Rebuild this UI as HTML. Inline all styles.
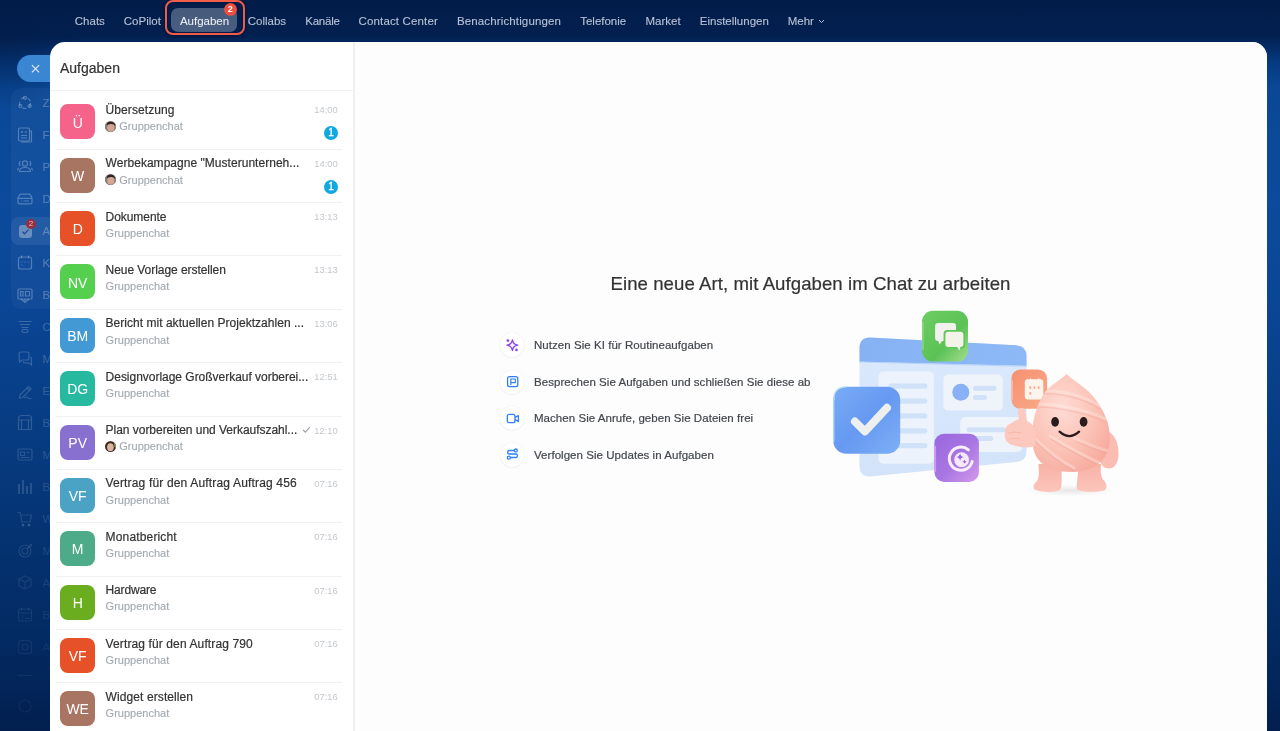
<!DOCTYPE html>
<html><head><meta charset="utf-8">
<style>
*{margin:0;padding:0;box-sizing:border-box}
html,body{width:1280px;height:731px;overflow:hidden}
body{position:relative;font-family:"Liberation Sans",sans-serif;
background:radial-gradient(ellipse 90px 70px at 0px 40px,rgba(2,28,72,0.55),rgba(2,28,72,0)),linear-gradient(180deg,#021c48 0px,#022050 36px,#053a80 62px,#0a4896 88px,#0b4a9c 200px,#0a4696 300px,#073c82 430px,#04316e 560px,#032a62 640px,#021f4f 731px);
}
.nav{position:absolute;top:15.6px;font-size:11.5px;line-height:1;color:#b9c3d5;white-space:nowrap}
.pill{position:absolute;left:171px;top:7.8px;width:66px;height:24.2px;border-radius:7px;background:rgba(255,255,255,0.28)}
.redbox{position:absolute;left:165.3px;top:-0.2px;width:79.4px;height:35.4px;border:2.8px solid #f05c4a;border-radius:8px;box-shadow:0 1px 3px rgba(0,5,25,0.55),inset 0 0 2px rgba(0,5,25,0.6)}
.nbadge{position:absolute;left:223.8px;top:3px;width:13px;height:13px;border-radius:50%;background:#ec4e40;color:#fff;font-size:9px;font-weight:bold;line-height:13px;text-align:center}
.sb{position:absolute;left:11px;top:88.3px;width:60px;height:221px;border-radius:10px;background:rgba(255,255,255,0.035)}
.sbi{position:absolute;left:18px;width:14px;height:14px;border:1.3px solid rgba(255,255,255,0.22);border-radius:3px}
.sbl{position:absolute;left:42.5px;font-size:11.5px;line-height:1;color:rgba(255,255,255,0.25)}
.close{position:absolute;left:16.6px;top:55px;width:60px;height:27.3px;border-radius:14px;background:#3a86d2}
.panel{position:absolute;left:49.6px;top:41.5px;width:1217.5px;height:720px;background:#fff;border-radius:15px 15px 0 0;overflow:hidden}
.list{position:absolute;left:303.8px;top:0;width:1.5px;height:100%;background:#eef0f3}
.hdr{position:absolute;left:60px;top:60.85px;font-size:14px;line-height:1;color:#333}
.hsep{position:absolute;left:50px;top:89.9px;width:304px;height:1.2px;background:#eff1f3}
.sep{position:absolute;left:56px;width:286px;height:1px;background:#eff1f3}
.av{position:absolute;left:60.2px;width:35px;height:35px;border-radius:8px;color:#fff;font-size:14px;line-height:35px;text-align:center}
.av span{position:relative;top:1.2px}
.tt{position:absolute;left:105.6px;font-size:12px;line-height:1;color:#333;white-space:nowrap}
.st{position:absolute;left:105.6px;font-size:11px;line-height:1;color:#a3a9b1;white-space:nowrap;-webkit-text-stroke:0.12px #a3a9b1}
.tm{position:absolute;right:942.5px;font-size:9.9px;transform:scaleX(0.95);transform-origin:100% 50%;line-height:1;color:#c4c8cd;white-space:nowrap}
.bd{position:absolute;left:324px;width:14px;height:14px;border-radius:50%;background:#10a8e0;color:#fff;font-size:10px;line-height:14px;text-align:center;-webkit-text-stroke:0.3px #fff}
.ua{position:absolute;left:105px;width:11px;height:11px;border-radius:50%;background:radial-gradient(circle at 50% 45%,#e8b89e 0,#d09a80 35%,#6d5a50 70%)}
.ck{position:absolute;left:302px}
.big{position:absolute;left:610.5px;top:274.8px;font-size:18.6px;letter-spacing:0.065px;line-height:1;color:#333;white-space:nowrap}
.fi{position:absolute;left:500.4px;width:24px;height:24px;margin-top:0.8px;border-radius:50%;background:#fff;box-shadow:0 0 1.5px rgba(0,0,0,0.09),0 1px 2px rgba(0,0,0,0.03)}
.fi svg{position:absolute;left:-0.1px;top:-0.5px}
.ft{position:absolute;left:534px;font-size:11.5px;line-height:1;letter-spacing:0.045px;color:#43474d;white-space:nowrap}
#root{position:absolute;left:0;top:0;width:1280px;height:731px;will-change:transform}
.tt,.hdr,.big{-webkit-text-stroke:0.2px #333}
.ft{-webkit-text-stroke:0.2px #43474d}
.nav{-webkit-text-stroke:0.1px #b9c3d5}
</style></head><body><div id="root">
<!-- top nav -->
<div class="pill"></div>
<div class="nav" style="left:74.8px">Chats</div>
<div class="nav" style="left:123.8px">CoPilot</div>
<div class="nav" style="left:179.9px;color:#f4f6fa">Aufgaben</div>
<div class="nav" style="left:247.7px">Collabs</div>
<div class="nav" style="left:305.3px;letter-spacing:-0.25px">Kanäle</div>
<div class="nav" style="left:358.6px;letter-spacing:0.14px">Contact Center</div>
<div class="nav" style="left:456.9px;letter-spacing:0.14px">Benachrichtigungen</div>
<div class="nav" style="left:580.2px">Telefonie</div>
<div class="nav" style="left:645.5px">Market</div>
<div class="nav" style="left:699.8px">Einstellungen</div>
<div class="nav" style="left:787.7px">Mehr</div>
<svg style="position:absolute;left:818px;top:18.5px" width="7" height="5" viewBox="0 0 7 5"><path d="M1 1 L3.5 3.6 L6 1" fill="none" stroke="#b9c3d5" stroke-width="1"/></svg>
<div class="redbox"></div>
<div class="nbadge">2</div>

<!-- sidebar -->
<div class="sb"></div>
<div style="position:absolute;left:11px;top:216.8px;width:60px;height:28.4px;border-radius:8px;background:rgba(255,255,255,0.07)"></div>
<div class="sbl" style="top:98.4px;color:rgba(255,255,255,0.280)">Z</div>
<div class="sbl" style="top:130.4px;color:rgba(255,255,255,0.280)">F</div>
<div class="sbl" style="top:162.4px;color:rgba(255,255,255,0.280)">P</div>
<div class="sbl" style="top:194.4px;color:rgba(255,255,255,0.280)">D</div>
<div style="position:absolute;left:18.5px;top:224.5px;width:13px;height:13px;border-radius:3px;background:rgba(255,255,255,0.32)"></div>
<svg style="position:absolute;left:18.5px;top:224.5px" width="13" height="13" viewBox="0 0 13 13"><path d="M3.5 6.8 L5.6 8.8 L9.5 4.6" fill="none" stroke="#1d4f93" stroke-width="1.3"/></svg>
<div style="position:absolute;left:26px;top:218.5px;width:10px;height:10px;border-radius:50%;background:#9b2d3e;color:rgba(255,255,255,.7);font-size:8px;line-height:10px;text-align:center">2</div>
<div class="sbl" style="top:226.4px;color:rgba(255,255,255,0.280)">A</div>
<div class="sbl" style="top:258.4px;color:rgba(255,255,255,0.280)">K</div>
<div class="sbl" style="top:290.4px;color:rgba(255,255,255,0.280)">B</div>
<div class="sbl" style="top:322.4px;color:rgba(255,255,255,0.207)">C</div>
<div class="sbl" style="top:354.4px;color:rgba(255,255,255,0.192)">M</div>
<div class="sbl" style="top:386.4px;color:rgba(255,255,255,0.178)">E</div>
<div class="sbl" style="top:418.4px;color:rgba(255,255,255,0.164)">B</div>
<div class="sbl" style="top:450.4px;color:rgba(255,255,255,0.149)">M</div>
<div class="sbl" style="top:482.4px;color:rgba(255,255,255,0.135)">B</div>
<div class="sbl" style="top:514.4px;color:rgba(255,255,255,0.120)">W</div>
<div class="sbl" style="top:546.4px;color:rgba(255,255,255,0.106)">M</div>
<div class="sbl" style="top:578.4px;color:rgba(255,255,255,0.092)">A</div>
<div class="sbl" style="top:610.4px;color:rgba(255,255,255,0.077)">B</div>
<div class="sbl" style="top:642.4px;color:rgba(255,255,255,0.063)">A</div>
<svg style="position:absolute;left:0;top:0" width="50" height="731" viewBox="0 0 50 731"><g stroke="rgba(255,255,255,0.280)" fill="rgba(255,255,255,0.280)" stroke-width="1.2"><circle cx="25" cy="103" r="5.5" fill="none" stroke-dasharray="4 3"/><circle cx="25" cy="97.8" r="1.5" fill="none"/><circle cx="20.3" cy="106" r="1.5" fill="none"/><circle cx="29.7" cy="106" r="1.5" fill="none"/></g><g stroke="rgba(255,255,255,0.280)" fill="rgba(255,255,255,0.280)" stroke-width="1.2"><rect x="18.5" y="128" width="11" height="13" rx="1.5" fill="none"/><path d="M29.5 131 H31.5 V141 Q31.5 142 30.5 142 H21" fill="none"/><path d="M21 132 H23 M22 131 V133 M24.5 132 H27 M21 135.5 H27 M21 138 H27" fill="none"/></g><g stroke="rgba(255,255,255,0.280)" fill="rgba(255,255,255,0.280)" stroke-width="1.2"><circle cx="25" cy="163.5" r="2.6" fill="none"/><path d="M19.5 171.5 Q19.5 167.5 25 167.5 Q30.5 167.5 30.5 171.5 Z" fill="none"/><path d="M20 161 Q18.5 163.5 20 166 M30 161 Q31.5 163.5 30 166 M17.5 170.5 Q17.5 168.5 19 168 M32.5 170.5 Q32.5 168.5 31 168" fill="none"/></g><g stroke="rgba(255,255,255,0.280)" fill="rgba(255,255,255,0.280)" stroke-width="1.2"><path d="M19.5 195 Q20 194.2 21 194.2 H29 Q30 194.2 30.5 195 L32 198 V202.5 Q32 203.8 30.7 203.8 H19.3 Q18 203.8 18 202.5 V198 Z M18 198.3 H32" fill="none"/><path d="M21 201 H21.6 M23.5 201 H29" fill="none"/></g><g stroke="rgba(255,255,255,0.280)" fill="rgba(255,255,255,0.280)" stroke-width="1.2"><rect x="18.5" y="257" width="13" height="12" rx="2" fill="none"/><path d="M21.5 255.5 V258.5 M28.5 255.5 V258.5 M21.5 262 H22.5 M24.5 262 H25.5 M27.5 262 H28.5 M21.5 265 H22.5" fill="none"/></g><g stroke="rgba(255,255,255,0.280)" fill="rgba(255,255,255,0.280)" stroke-width="1.2"><rect x="18" y="289" width="14" height="10" rx="1" fill="none"/><path d="M21 299 L25 302.5 L29 299 M25 299 V302" fill="none"/><path d="M20.5 291.5 H23 V296 H20.5 Z M25.5 291.5 H29.5 V296 H25.5 Z" fill="none"/></g><g stroke="rgba(255,255,255,0.207)" fill="rgba(255,255,255,0.207)" stroke-width="1.2"><path d="M18.5 321.5 H31.5 M20 324.5 H30 M21.5 327.5 H28.5" fill="none"/><rect x="22" y="329.5" width="6" height="3" rx="1.5" fill="none"/></g><g stroke="rgba(255,255,255,0.192)" fill="rgba(255,255,255,0.192)" stroke-width="1.2"><path d="M19 354 Q19 352 21 352 H27 Q29 352 29 354 V358 Q29 360 27 360 H22 L19.5 362 Z" fill="none"/><path d="M23 361.5 Q23 363 25 363 H29 L31.5 365 V359 Q31.5 357 30 357" fill="none"/></g><g stroke="rgba(255,255,255,0.178)" fill="rgba(255,255,255,0.178)" stroke-width="1.2"><path d="M20 395 L28.5 386.5 L31 389 L22.5 397.5 L19.5 398 Z M27 388 L29.5 390.5" fill="none"/><path d="M24 398 Q27 396 28 398 Q29 399.5 31.5 398" fill="none"/></g><g stroke="rgba(255,255,255,0.164)" fill="rgba(255,255,255,0.164)" stroke-width="1.2"><path d="M18.5 429.5 V418.5 Q18.5 415.5 21.5 415.5 H28.5 Q31.5 415.5 31.5 418.5 V429.5 Z M18.5 420 H31.5 M21.5 420 V429.5 M28.5 420 V429.5" fill="none"/></g><g stroke="rgba(255,255,255,0.149)" fill="rgba(255,255,255,0.149)" stroke-width="1.2"><rect x="18" y="449" width="14" height="11" rx="1.5" fill="none"/><path d="M20.5 452 H24.5 V455.5 H20.5 Z M26.5 452.5 H29.5 M20.5 457.5 H29.5" fill="none"/></g><g stroke="rgba(255,255,255,0.135)" fill="rgba(255,255,255,0.135)" stroke-width="1.2"><path d="M19 494 V484 M23 494 V480 M27 494 V486 M31 494 V483" fill="none" stroke-width="2.2"/></g><g stroke="rgba(255,255,255,0.120)" fill="rgba(255,255,255,0.120)" stroke-width="1.2"><path d="M17.5 512.5 H20 L22 522 H30 L31.5 515 H21" fill="none"/><circle cx="23" cy="525" r="1"/><circle cx="29" cy="525" r="1"/></g><g stroke="rgba(255,255,255,0.106)" fill="rgba(255,255,255,0.106)" stroke-width="1.2"><circle cx="25" cy="551" r="6" fill="none"/><circle cx="25" cy="551" r="3" fill="none"/><path d="M27 549 L31 545 M29.5 544.5 H31.5 V546.5" fill="none"/></g><g stroke="rgba(255,255,255,0.092)" fill="rgba(255,255,255,0.092)" stroke-width="1.2"><path d="M25 576 L31 579 V586 L25 589 L19 586 V579 Z M19 579 L25 582 L31 579 M25 582 V589" fill="none"/></g><g stroke="rgba(255,255,255,0.077)" fill="rgba(255,255,255,0.077)" stroke-width="1.2"><rect x="18.5" y="609" width="13" height="12" rx="2" fill="none"/><path d="M21.5 607.5 V610.5 M28.5 607.5 V610.5 M18.5 613 H31.5 M21.5 616 H23 M21.5 618.5 H23 M25 618.5 H30" fill="none"/></g><g stroke="rgba(255,255,255,0.063)" fill="rgba(255,255,255,0.063)" stroke-width="1.2"><rect x="18.5" y="640.5" width="13" height="13" rx="3" fill="none"/><circle cx="25" cy="647" r="3" fill="none"/></g><path d="M18 675.5 H32" stroke="rgba(255,255,255,0.06)" stroke-width="1.2"/><circle cx="25" cy="706" r="6" fill="none" stroke="rgba(255,255,255,0.05)" stroke-width="1.2"/></svg>
<div class="close"></div>
<svg style="position:absolute;left:30px;top:62.5px" width="11" height="11" viewBox="0 0 11 11"><path d="M1.9 2.1 L9.1 9.3 M9.1 2.1 L1.9 9.3" stroke="#dfe8f2" stroke-width="1.2"/></svg>

<!-- panel -->
<div class="panel">
 <div style="position:absolute;left:304px;top:0;right:0;bottom:0;background:#fdfdfd"></div><div class="list"></div>
</div>
<div class="hdr">Aufgaben</div>
<div class="hsep"></div>
<div class="av" style="top:104.40px;background:#f5628a"><span>Ü</span></div>
<div class="tt" style="top:104.00px;letter-spacing:0.080px">Übersetzung</div>
<svg class="ua" style="top:120.90px" width="11" height="11" viewBox="0 0 11 11"><defs><clipPath id="c0"><circle cx="5.5" cy="5.5" r="5.3"/></clipPath></defs><g clip-path="url(#c0)"><rect width="11" height="11" fill="#7d7f82"/><ellipse cx="5.8" cy="6.6" rx="3.6" ry="4.4" fill="#d6a592"/><path d="M1.5 4.5 Q2 0.5 6 0.6 Q10 0.8 10.2 5 Q9 2.8 6 3 Q3 3 1.5 4.5Z" fill="#2e2624"/></g></svg>
<div class="st" style="top:121.20px;left:119.3px">Gruppenchat</div>
<div class="tm" style="top:105.40px">14:00</div>
<div class="bd" style="top:126.40px">1</div>
<div class="sep" style="top:148.75px"></div>
<div class="av" style="top:157.75px;background:#a87562"><span>W</span></div>
<div class="tt" style="top:157.35px;letter-spacing:0.032px">Werbekampagne "Musterunterneh...</div>
<svg class="ua" style="top:174.25px" width="11" height="11" viewBox="0 0 11 11"><defs><clipPath id="c1"><circle cx="5.5" cy="5.5" r="5.3"/></clipPath></defs><g clip-path="url(#c1)"><rect width="11" height="11" fill="#7d7f82"/><ellipse cx="5.8" cy="6.6" rx="3.6" ry="4.4" fill="#d6a592"/><path d="M1.5 4.5 Q2 0.5 6 0.6 Q10 0.8 10.2 5 Q9 2.8 6 3 Q3 3 1.5 4.5Z" fill="#2e2624"/></g></svg>
<div class="st" style="top:174.55px;left:119.3px">Gruppenchat</div>
<div class="tm" style="top:158.75px">14:00</div>
<div class="bd" style="top:179.75px">1</div>
<div class="sep" style="top:202.10px"></div>
<div class="av" style="top:211.10px;background:#e65128"><span>D</span></div>
<div class="tt" style="top:210.70px;letter-spacing:-0.062px">Dokumente</div>
<div class="st" style="top:227.90px">Gruppenchat</div>
<div class="tm" style="top:212.10px">13:13</div>
<div class="sep" style="top:255.45px"></div>
<div class="av" style="top:264.45px;background:#55d04e"><span>NV</span></div>
<div class="tt" style="top:264.05px;letter-spacing:-0.057px">Neue Vorlage erstellen</div>
<div class="st" style="top:281.25px">Gruppenchat</div>
<div class="tm" style="top:265.45px">13:13</div>
<div class="sep" style="top:308.80px"></div>
<div class="av" style="top:317.80px;background:#4299d3"><span>BM</span></div>
<div class="tt" style="top:317.40px;letter-spacing:0.026px">Bericht mit aktuellen Projektzahlen ...</div>
<div class="st" style="top:334.60px">Gruppenchat</div>
<div class="tm" style="top:318.80px">13:06</div>
<div class="sep" style="top:362.15px"></div>
<div class="av" style="top:371.15px;background:#26b9a0"><span>DG</span></div>
<div class="tt" style="top:370.75px;letter-spacing:-0.022px">Designvorlage Großverkauf vorberei...</div>
<div class="st" style="top:387.95px">Gruppenchat</div>
<div class="tm" style="top:372.15px">12:51</div>
<div class="sep" style="top:415.50px"></div>
<div class="av" style="top:424.50px;background:#8870d0"><span>PV</span></div>
<div class="tt" style="top:424.10px;letter-spacing:-0.031px">Plan vorbereiten und Verkaufszahl...</div>
<svg class="ua" style="top:441.00px" width="11" height="11" viewBox="0 0 11 11"><defs><clipPath id="c6"><circle cx="5.5" cy="5.5" r="5.3"/></clipPath></defs><g clip-path="url(#c6)"><rect width="11" height="11" fill="#3a2a24"/><path d="M9 1 L11 3 L11 7 L9.5 6Z" fill="#8fae5a"/><ellipse cx="5.4" cy="6.2" rx="3.3" ry="4" fill="#dcb3a2"/></g></svg>
<div class="st" style="top:441.30px;left:119.3px">Gruppenchat</div>
<div class="tm" style="top:425.50px">12:10</div>
<svg class="ck" style="top:426.00px" width="9" height="7" viewBox="0 0 9 7"><path d="M1 3.9 L3.3 6.1 L7.8 1.1" fill="none" stroke="#9ba1a9" stroke-width="1.1"/></svg>
<div class="sep" style="top:468.85px"></div>
<div class="av" style="top:477.85px;background:#4aa3c4"><span>VF</span></div>
<div class="tt" style="top:477.45px;letter-spacing:0.165px">Vertrag für den Auftrag Auftrag 456</div>
<div class="st" style="top:494.65px">Gruppenchat</div>
<div class="tm" style="top:478.85px">07:16</div>
<div class="sep" style="top:522.20px"></div>
<div class="av" style="top:531.20px;background:#4dab8a"><span>M</span></div>
<div class="tt" style="top:530.80px;letter-spacing:0.155px">Monatbericht</div>
<div class="st" style="top:548.00px">Gruppenchat</div>
<div class="tm" style="top:532.20px">07:16</div>
<div class="sep" style="top:575.55px"></div>
<div class="av" style="top:584.55px;background:#6aad1e"><span>H</span></div>
<div class="tt" style="top:584.15px;letter-spacing:-0.171px">Hardware</div>
<div class="st" style="top:601.35px">Gruppenchat</div>
<div class="tm" style="top:585.55px">07:16</div>
<div class="sep" style="top:628.90px"></div>
<div class="av" style="top:637.90px;background:#e65128"><span>VF</span></div>
<div class="tt" style="top:637.50px;letter-spacing:0.115px">Vertrag für den Auftrag 790</div>
<div class="st" style="top:654.70px">Gruppenchat</div>
<div class="tm" style="top:638.90px">07:16</div>
<div class="sep" style="top:682.25px"></div>
<div class="av" style="top:691.25px;background:#a87562"><span>WE</span></div>
<div class="tt" style="top:690.85px;letter-spacing:0.093px">Widget erstellen</div>
<div class="st" style="top:708.05px">Gruppenchat</div>
<div class="tm" style="top:692.25px">07:16</div>

<!-- main -->
<div class="big">Eine neue Art, mit Aufgaben im Chat zu arbeiten</div>
<div class="fi" style="top:332.3px"><svg width="25.6" height="25.6" viewBox="0 0 25.6 25.6"><path d="M12.4 6.9 Q13.1 11.5 17.8 12.2 Q13.1 12.9 12.4 17.5 Q11.7 12.9 7 12.2 Q11.7 11.5 12.4 6.9 Z" fill="none" stroke="#8a3ff0" stroke-width="1.3" stroke-linejoin="round"/><circle cx="7.9" cy="7.6" r="1.3" fill="#8a3ff0"/><circle cx="16.5" cy="16.9" r="1.3" fill="#8a3ff0"/></svg></div>
<div class="ft" style="top:340.07px">Nutzen Sie KI für Routineaufgaben</div>
<div class="fi" style="top:368.9px"><svg width="25.6" height="25.6" viewBox="0 0 25.6 25.6"><rect x="7.6" y="7.6" width="10.2" height="10" rx="2" fill="none" stroke="#2f7ff5" stroke-width="1.3"/><path d="M10.8 16 V10 H15.3 V13.6 H10.8" fill="none" stroke="#2f7ff5" stroke-width="1.2" stroke-linejoin="round"/></svg></div>
<div class="ft" style="top:376.77px">Besprechen Sie Aufgaben und schließen Sie diese ab</div>
<div class="fi" style="top:405.5px"><svg width="25.6" height="25.6" viewBox="0 0 25.6 25.6"><rect x="7.3" y="8.4" width="7.7" height="8.2" rx="1.9" fill="none" stroke="#2f7ff5" stroke-width="1.3"/><path d="M15 11.3 L18.4 9.7 V15.3 L15 13.7" fill="none" stroke="#2f7ff5" stroke-width="1.3" stroke-linejoin="round"/></svg></div>
<div class="ft" style="top:413.47px">Machen Sie Anrufe, geben Sie Dateien frei</div>
<div class="fi" style="top:442.1px"><svg width="25.6" height="25.6" viewBox="0 0 25.6 25.6"><path d="M14.4 8.5 H9.4 A1.75 1.75 0 0 0 9.4 12 H15.7 A1.75 1.75 0 0 1 15.7 15.5 H10.6" fill="none" stroke="#2f7ff5" stroke-width="1.3"/><circle cx="15.8" cy="8.5" r="1.5" fill="none" stroke="#2f7ff5" stroke-width="1.3"/><circle cx="8.9" cy="15.7" r="1.5" fill="none" stroke="#2f7ff5" stroke-width="1.3"/></svg></div>
<div class="ft" style="top:449.97px">Verfolgen Sie Updates in Aufgaben</div>
<svg style="position:absolute;left:825px;top:300px" width="310" height="200" viewBox="825 300 310 200">
 <defs>
  <linearGradient id="gWin" x1="0" y1="0" x2="0" y2="1"><stop offset="0" stop-color="#dbe9fc"/><stop offset="1" stop-color="#d2e3fa"/></linearGradient>
  <linearGradient id="gBar" x1="0" y1="0" x2="1" y2="0"><stop offset="0" stop-color="#86b2f4"/><stop offset="1" stop-color="#8db9f7"/></linearGradient>
  <linearGradient id="gBlue" x1="0" y1="0" x2="1" y2="1"><stop offset="0" stop-color="#7aacf7"/><stop offset="0.5" stop-color="#6699f1"/><stop offset="1" stop-color="#7eb0f6"/></linearGradient>
  <linearGradient id="gGreen" x1="0" y1="0" x2="1" y2="1"><stop offset="0" stop-color="#6ccd62"/><stop offset="0.6" stop-color="#5cc257"/><stop offset="1" stop-color="#a4de8c"/></linearGradient>
  <linearGradient id="gPurp" x1="0" y1="0" x2="1" y2="1"><stop offset="0" stop-color="#9a66de"/><stop offset="0.55" stop-color="#a877e3"/><stop offset="1" stop-color="#d69aec"/></linearGradient>
  <linearGradient id="gOr" x1="0" y1="0" x2="1" y2="1"><stop offset="0" stop-color="#f7906f"/><stop offset="1" stop-color="#f9aa8a"/></linearGradient>
  <radialGradient id="gPink" cx="0.38" cy="0.35" r="0.75"><stop offset="0" stop-color="#ffdcd5"/><stop offset="0.55" stop-color="#fcc3b7"/><stop offset="1" stop-color="#f5a99c"/></radialGradient>
  <linearGradient id="gLeg" x1="0" y1="0" x2="0" y2="1"><stop offset="0" stop-color="#f8b2a6"/><stop offset="1" stop-color="#fcc5bb"/></linearGradient>
  <radialGradient id="gShadow" cx="0.5" cy="0.5" r="0.5"><stop offset="0" stop-color="#7a6a6a" stop-opacity="0.16"/><stop offset="1" stop-color="#7a6a6a" stop-opacity="0"/></radialGradient>
  <clipPath id="bodyClip"><path d="M1066.5 374 C1072 380 1087 387 1096 400 C1104 411 1109.5 423 1110 437 C1110.5 455 1100 471 1072 472 C1046 472 1034 461 1032.5 443 C1031 423 1036 405 1045 392 C1052 384 1062 379 1066.5 374 Z"/></clipPath>
  <filter id="soft" x="-10%" y="-10%" width="120%" height="120%"><feGaussianBlur stdDeviation="0.35"/></filter>
 </defs>
 <g filter="url(#soft)">
 <!-- window -->
 <path d="M870 337.4 L1016 345.3 Q1026.5 346 1026.5 356 L1026.5 452 Q1026.5 461 1016 462 L870 476.4 Q859.5 477 859.5 466 L859.5 348 Q859.5 337.4 870 337.4 Z" fill="url(#gWin)"/>
 <path d="M870 337.4 L1016 345.3 Q1026.5 346 1026.5 356 L1026.5 366 L859.5 361.8 L859.5 348 Q859.5 337.4 870 337.4 Z" fill="url(#gBar)"/>
 <path d="M859.5 362 L1026.5 366.2" stroke="#b9d4f8" stroke-width="1.2"/>
 <rect x="878.6" y="371.4" width="55.2" height="92.3" rx="5" fill="#ecf3fd"/>
 <g fill="#d0e2f8"><rect x="888.2" y="383.6" width="39.2" height="5.2" rx="2.6"/><rect x="888.2" y="398.5" width="39.2" height="5.2" rx="2.6"/><rect x="888.2" y="413.3" width="39.2" height="5.2" rx="2.6"/><rect x="888.2" y="428.2" width="39.2" height="5.2" rx="2.6"/><rect x="888.2" y="443" width="39.2" height="5.2" rx="2.6"/></g>
 <rect x="943.4" y="374.6" width="59.4" height="36" rx="5" fill="#eff3fa"/>
 <circle cx="960.8" cy="392.2" r="8.5" fill="#8ab1f6"/>
 <rect x="973" y="385.8" width="23.4" height="5" rx="2.5" fill="#d0e1f8"/><rect x="973" y="395" width="13.9" height="5" rx="2.5" fill="#d0e1f8"/>
 <rect x="960.3" y="417" width="62" height="35" rx="5" fill="#eff3fa"/>
 <rect x="966.7" y="427.2" width="39.3" height="5" rx="2.5" fill="#d0e1f8"/><rect x="966.7" y="436.1" width="26.5" height="5" rx="2.5" fill="#d0e1f8"/>
 <!-- blue check tile -->
 <rect x="833.3" y="386.7" width="66.9" height="67" rx="13" fill="url(#gBlue)"/>
 <path d="M834 400 Q833.3 387 846 386.9" fill="none" stroke="#b5e4f5" stroke-width="1.2"/>
 <path d="M833.7 398 L833.7 442" stroke="#a9dcf3" stroke-width="1.4"/>
 <polyline points="854.9,421.5 864.9,431.5 887,407.8" fill="none" stroke="#eef0ef" stroke-width="7.9" stroke-linecap="round" stroke-linejoin="round"/>
 <!-- green tile -->
 <rect x="922" y="310.7" width="46" height="50.9" rx="11" fill="url(#gGreen)"/>
 <path d="M923 322 L923 350" stroke="#8fdc80" stroke-width="1.3"/>
 <rect x="935.1" y="323" width="20.9" height="18.1" rx="3" fill="#f2f1ee"/>
 <path d="M938 340 L939.5 344.5 L943 340 Z" fill="#f2f1ee"/>
 <rect x="943.6" y="330" width="21.6" height="18.6" rx="3.8" fill="#60c65a"/>
 <rect x="945.4" y="331.7" width="18" height="15.2" rx="3" fill="#f4f3ea"/>
 <path d="M956.5 346 L959.5 350.5 L960.5 346 Z" fill="#f4f3ea"/>
 <!-- purple tile -->
 <rect x="934.5" y="433.8" width="44.4" height="48.1" rx="9.5" fill="url(#gPurp)"/>
 <path d="M935.3 446 L935.3 472" stroke="#d596ea" stroke-width="1.6"/>
 <path d="M968.4 449.8 A11.6 11.6 0 1 0 972.2 461.5" fill="none" stroke="#fbeefc" stroke-width="3" stroke-linecap="round"/>
 <circle cx="961.6" cy="459.7" r="7.4" fill="#f7e9fb"/>
 <path d="M960.1 453.3 Q960.6 456.6 963.9 457.1 Q960.6 457.6 960.1 460.9 Q959.6 457.6 956.3 457.1 Q959.6 456.6 960.1 453.3Z" fill="#9a68de"/>
 <path d="M964.5 459.6 Q964.8 461.5 966.7 461.8 Q964.8 462.1 964.5 464 Q964.2 462.1 962.3 461.8 Q964.2 461.5 964.5 459.6Z" fill="#9a68de"/>
 <!-- orange tile -->
 <rect x="1011.5" y="369.4" width="35.6" height="39.4" rx="9" fill="url(#gOr)"/>
 <path d="M1012.3 380 L1012.3 400" stroke="#fab7a0" stroke-width="1.4"/>
 <rect x="1024.8" y="379.3" width="18.5" height="20.2" rx="3" fill="#fdf5ed"/>
 <path d="M1029.6 381 L1030.6 377.6 L1031.8 381 Z M1037.6 381 L1038.7 377.6 L1039.8 381 Z" fill="#fdf5ed"/>
 <g fill="#f9a98a"><rect x="1029.3" y="386.3" width="2" height="2.8" rx="1"/><rect x="1033.5" y="386.3" width="2" height="2.8" rx="1"/><rect x="1037.6" y="386.3" width="2" height="2.8" rx="1"/><rect x="1029.3" y="392" width="2" height="2.8" rx="1"/></g>
 <!-- character -->
 <ellipse cx="1070" cy="490.5" rx="44" ry="5.5" fill="url(#gShadow)"/>
 <path d="M1038.5 464 C1039 472 1039.5 477 1037 481 C1033 484 1032.5 488.5 1035.5 490 C1043 492.5 1055 492.5 1060 490 C1062.5 487 1061.5 478 1061.5 464 Z" fill="url(#gLeg)"/>
 <path d="M1078.5 464 C1078.5 476 1076 484 1077 489.5 C1082 492.5 1100 492.5 1105 490 C1108 487 1106 482 1102.5 479 C1100.5 475 1100.5 470 1101 464 Z" fill="url(#gLeg)"/>
 <path d="M1104 430 C1114 432 1119 442 1118.5 455 C1118 466 1112 470 1106 468 C1099 466 1097 452 1099 442 Z" fill="#fbbdb1"/>
 <path d="M1066.5 374 C1072 380 1087 387 1096 400 C1104 411 1109.5 423 1110 437 C1110.5 455 1100 471 1072 472 C1046 472 1034 461 1032.5 443 C1031 423 1036 405 1045 392 C1052 384 1062 379 1066.5 374 Z" fill="url(#gPink)"/>
 <g clip-path="url(#bodyClip)" fill="none" stroke-linecap="round">
  <path d="M1045 391 C1062 390 1084 396 1100 406" stroke="#fff1ec" stroke-width="3" opacity="0.35"/>
  <path d="M1046 394 C1062 393 1084 399 1100 409" stroke="#f0a294" stroke-width="1.3" opacity="0.4"/>
  <path d="M1036 404 C1058 404 1088 410 1108 420" stroke="#fff1ec" stroke-width="3" opacity="0.35"/>
  <path d="M1036 407 C1058 407 1088 413 1108 423" stroke="#f0a294" stroke-width="1.3" opacity="0.35"/>
  <path d="M1032 436 C1044 448 1058 460 1074 468" stroke="#fff1ec" stroke-width="3.2" opacity="0.35"/>
  <path d="M1033 439 C1045 451 1059 463 1075 471" stroke="#f0a294" stroke-width="1.4" opacity="0.45"/>
  <path d="M1050 436 C1066 446 1084 456 1102 464" stroke="#fff1ec" stroke-width="3.2" opacity="0.35"/>
  <path d="M1051 439 C1067 449 1085 459 1103 467" stroke="#f0a294" stroke-width="1.4" opacity="0.45"/>
  <path d="M1074 438 C1088 444 1100 450 1114 452" stroke="#fff1ec" stroke-width="3" opacity="0.3"/>
  <path d="M1075 441 C1089 447 1101 453 1114 455" stroke="#f0a294" stroke-width="1.3" opacity="0.4"/>
 </g>
 <path d="M1010 424 C1014 421 1017 420 1019 419 L1018 412 C1018 407 1024 406 1025 411 L1027 421 C1032 423 1036 428 1036 436 L1035 446 C1030 448 1022 448 1012 445 C1006 443 1004 438 1005 432 C1005 428 1007 425 1010 424 Z" fill="#fdc8bd"/>
 <path d="M1008 433 C1013 432 1018 432 1021 433 M1009 439 C1013 438 1017 438 1020 439" stroke="#f2a796" stroke-width="0.9" fill="none" opacity="0.6"/>
 <ellipse cx="1055.1" cy="421.9" rx="3.9" ry="4.8" fill="#2b1d1d"/>
 <ellipse cx="1083.6" cy="421.9" rx="3.9" ry="4.8" fill="#2b1d1d"/>
 <path d="M1059.6 431.7 Q1069.3 440.5 1079.1 431.7" fill="none" stroke="#2b1d1d" stroke-width="2.3" stroke-linecap="round"/>
 </g>
</svg>

</div></body></html>
